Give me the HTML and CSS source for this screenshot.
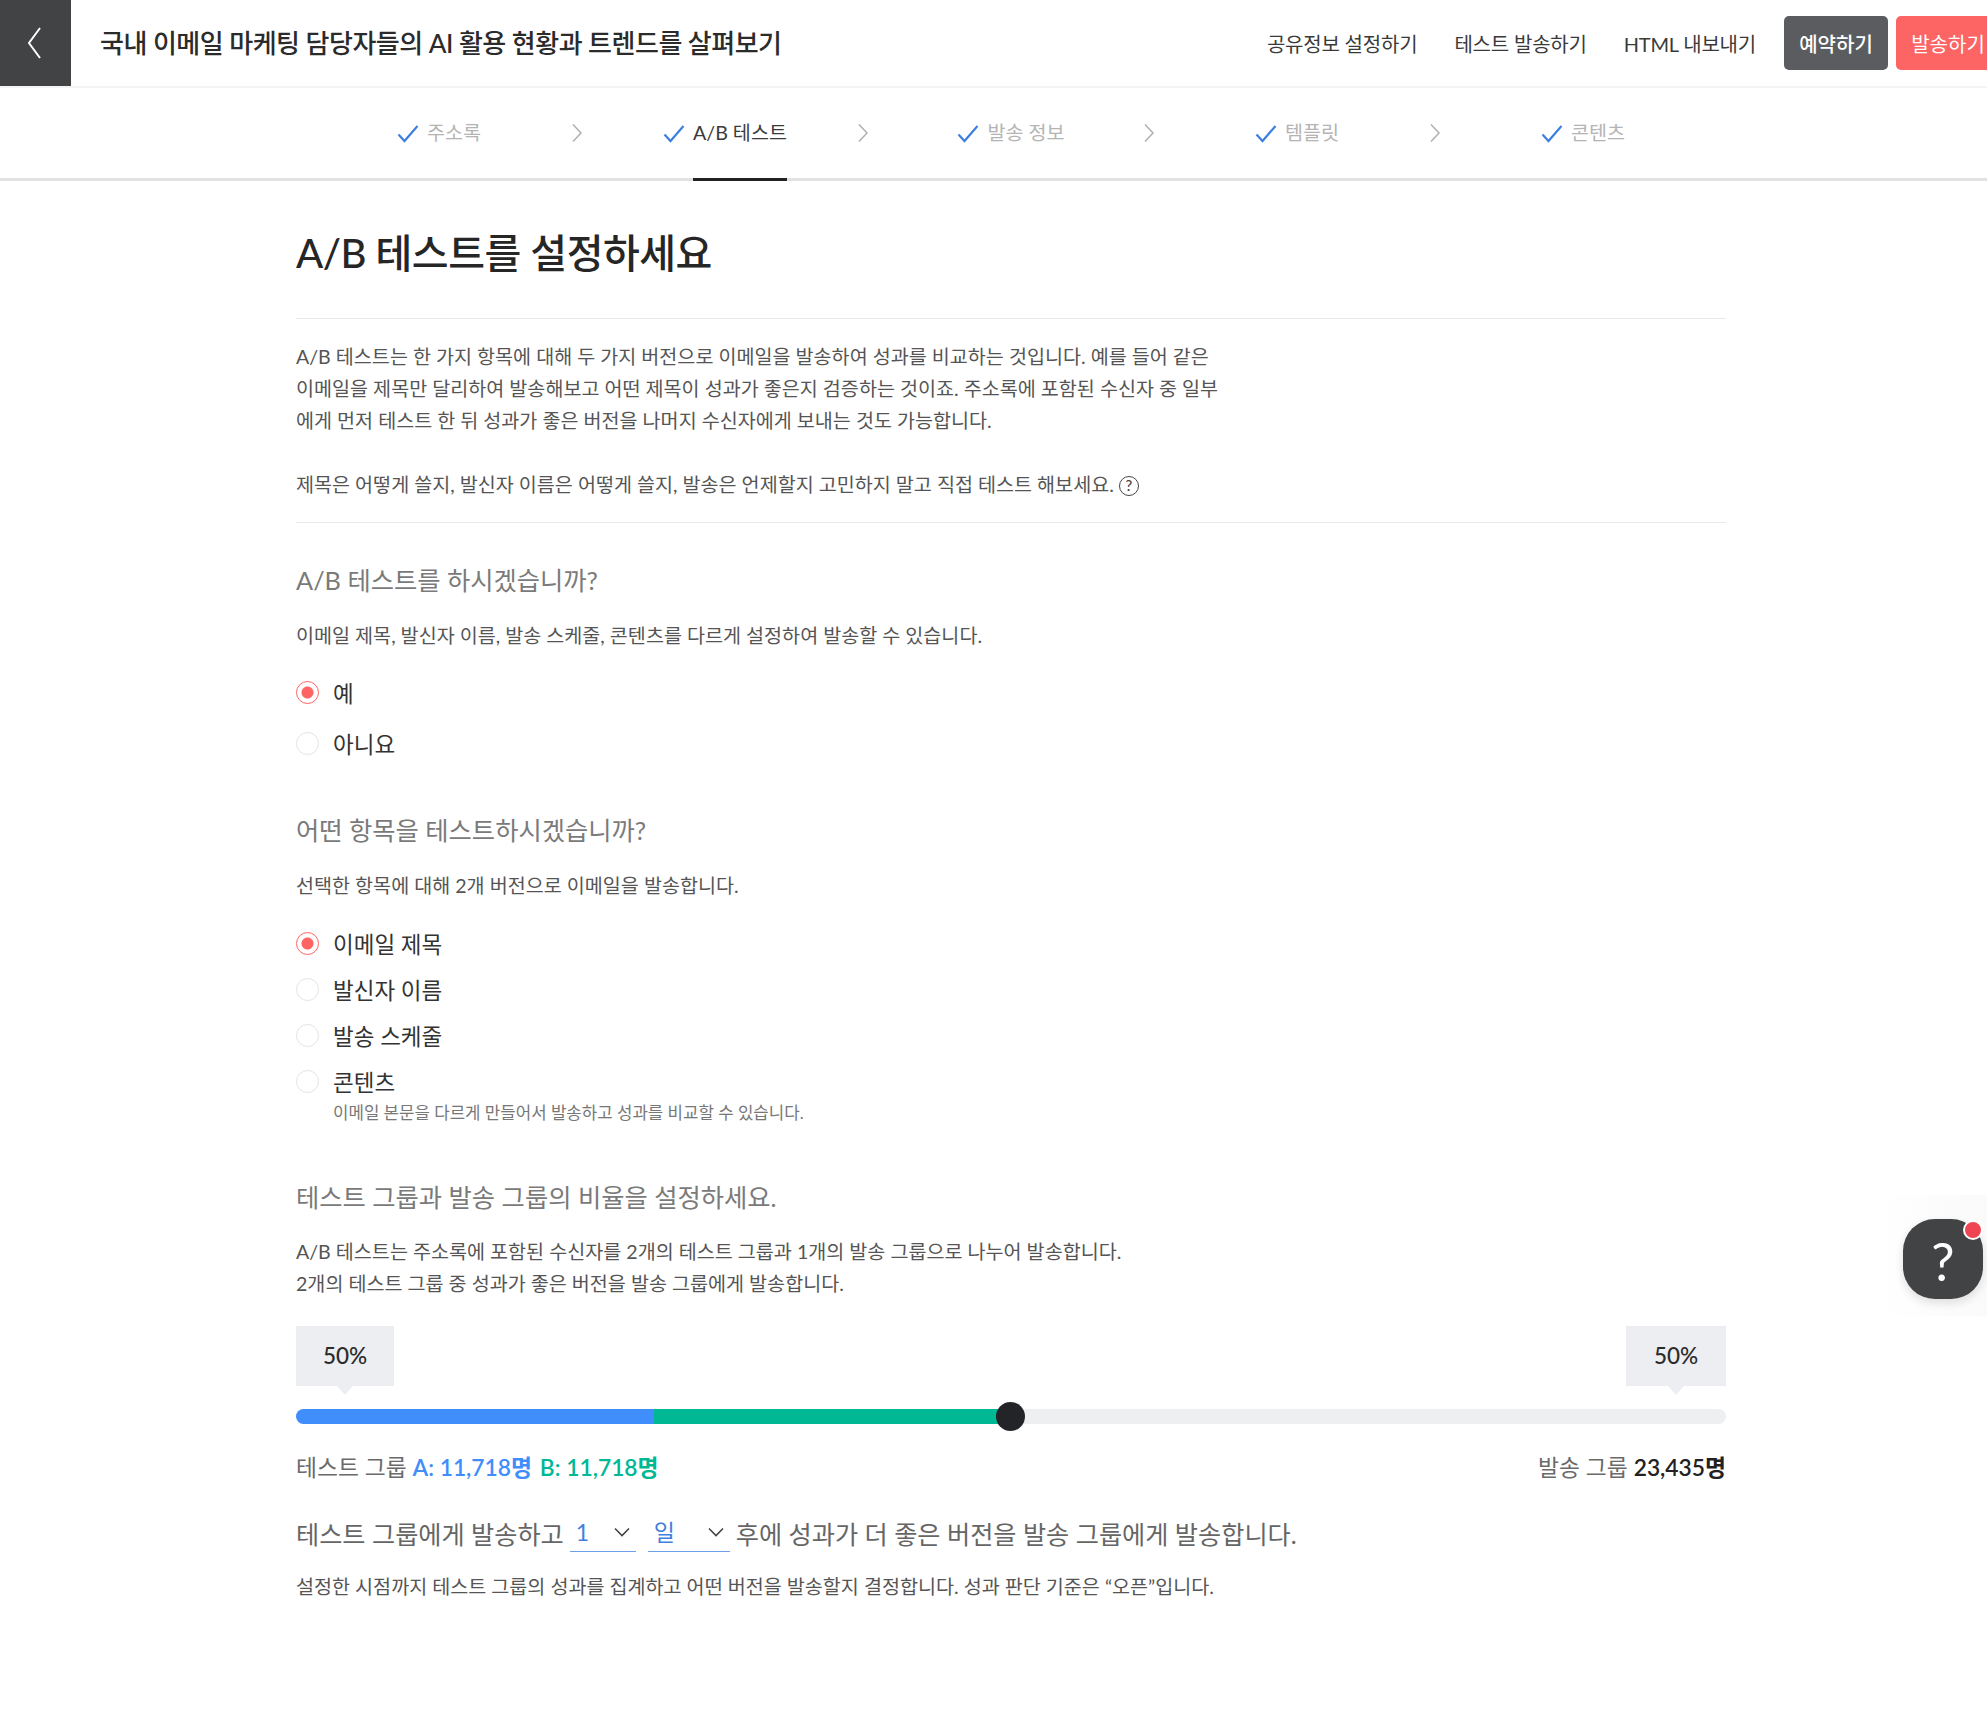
FILE: index.html
```html
<!DOCTYPE html>
<html lang="ko">
<head>
    <meta charset="UTF-8">
    <meta name="viewport" content="width=device-width, initial-scale=1.0">
    <title>A/B 테스트 설정</title>
    <link rel="stylesheet" href="styles.css">
</head>
<body>
    <header class="topbar">
        <a class="back-button" href="#">
            <svg width="20" height="32" viewBox="0 0 20 32"><path d="M14 1 3 16l11 15" fill="none" stroke="#fff" stroke-width="2"/></svg>
        </a>
        <div class="campaign-title">국내 이메일 마케팅 담당자들의 AI 활용 현황과 트렌드를 살펴보기</div>
        <nav class="top-actions">
            <a class="top-link" href="#">공유정보 설정하기</a>
            <a class="top-link" href="#">테스트 발송하기</a>
            <a class="top-link" href="#">HTML 내보내기</a>
            <button type="button" class="btn btn-dark">예약하기</button>
            <button type="button" class="btn btn-red">발송하기</button>
        </nav>
    </header>

    <div class="steps-bar">
        <div class="steps">
            <div class="step">
                <div class="step-label">
                    <svg class="check" viewBox="0 0 22 20"><path d="M1.5 10.5 7.5 17 20.5 2" fill="none" stroke="#3f7fe0" stroke-width="2.2"/></svg>
                    <span class="step-text">주소록</span>
                </div>
                <svg class="chevron" viewBox="0 0 12 20"><path d="M2 1.500 10 10 2 18.500" fill="none" stroke="#b0b0b0" stroke-width="1.500"/></svg>
            </div>
            <div class="step">
                <div class="step-label">
                    <svg class="check" viewBox="0 0 22 20"><path d="M1.5 10.5 7.5 17 20.5 2" fill="none" stroke="#3f7fe0" stroke-width="2.2"/></svg>
                    <span class="step-text active">A/B 테스트</span>
                </div>
                <svg class="chevron" viewBox="0 0 12 20"><path d="M2 1.500 10 10 2 18.500" fill="none" stroke="#b0b0b0" stroke-width="1.500"/></svg>
            </div>
            <div class="step">
                <div class="step-label">
                    <svg class="check" viewBox="0 0 22 20"><path d="M1.5 10.5 7.5 17 20.5 2" fill="none" stroke="#3f7fe0" stroke-width="2.2"/></svg>
                    <span class="step-text">발송 정보</span>
                </div>
                <svg class="chevron" viewBox="0 0 12 20"><path d="M2 1.500 10 10 2 18.500" fill="none" stroke="#b0b0b0" stroke-width="1.500"/></svg>
            </div>
            <div class="step">
                <div class="step-label">
                    <svg class="check" viewBox="0 0 22 20"><path d="M1.5 10.5 7.5 17 20.5 2" fill="none" stroke="#3f7fe0" stroke-width="2.2"/></svg>
                    <span class="step-text">템플릿</span>
                </div>
                <svg class="chevron" viewBox="0 0 12 20"><path d="M2 1.500 10 10 2 18.500" fill="none" stroke="#b0b0b0" stroke-width="1.500"/></svg>
            </div>
            <div class="step">
                <div class="step-label">
                    <svg class="check" viewBox="0 0 22 20"><path d="M1.5 10.5 7.5 17 20.5 2" fill="none" stroke="#3f7fe0" stroke-width="2.2"/></svg>
                    <span class="step-text">콘텐츠</span>
                </div>
            </div>
        </div>
    </div>

    <main class="container">
        <h1>A/B 테스트를 설정하세요</h1>

        <section class="intro">
            <p>A/B 테스트는 한 가지 항목에 대해 두 가지 버전으로 이메일을 발송하여 성과를 비교하는 것입니다. 예를 들어 같은<br>이메일을 제목만 달리하여 발송해보고 어떤 제목이 성과가 좋은지 검증하는 것이죠. 주소록에 포함된 수신자 중 일부<br>에게 먼저 테스트 한 뒤 성과가 좋은 버전을 나머지 수신자에게 보내는 것도 가능합니다.</p>
            <p class="intro-last">제목은 어떻게 쓸지, 발신자 이름은 어떻게 쓸지, 발송은 언제할지 고민하지 말고 직접 테스트 해보세요. <span class="help-mark">?</span></p>
        </section>

        <h2 class="first-title">A/B 테스트를 하시겠습니까?</h2>
        <p class="desc">이메일 제목, 발신자 이름, 발송 스케줄, 콘텐츠를 다르게 설정하여 발송할 수 있습니다.</p>
        <div class="radio-group wide">
            <div class="radio-row"><span class="radio checked"></span>예</div>
            <div class="radio-row"><span class="radio"></span>아니요</div>
        </div>

        <h2 class="second-title">어떤 항목을 테스트하시겠습니까?</h2>
        <p class="desc">선택한 항목에 대해 2개 버전으로 이메일을 발송합니다.</p>
        <div class="radio-group">
            <div class="radio-row"><span class="radio checked"></span>이메일 제목</div>
            <div class="radio-row"><span class="radio"></span>발신자 이름</div>
            <div class="radio-row"><span class="radio"></span>발송 스케줄</div>
            <div class="radio-row"><span class="radio"></span>콘텐츠</div>
        </div>
        <p class="hint">이메일 본문을 다르게 만들어서 발송하고 성과를 비교할 수 있습니다.</p>

        <h2 class="third-title">테스트 그룹과 발송 그룹의 비율을 설정하세요.</h2>
        <p class="desc desc-ratio">A/B 테스트는 주소록에 포함된 수신자를 2개의 테스트 그룹과 1개의 발송 그룹으로 나누어 발송합니다.<br>2개의 테스트 그룹 중 성과가 좋은 버전을 발송 그룹에게 발송합니다.</p>

        <div class="ratio-labels">
            <div class="ratio-tip">50%</div>
            <div class="ratio-tip">50%</div>
        </div>
        <div class="slider">
            <div class="slider-a"></div>
            <div class="slider-b"></div>
            <div class="slider-thumb"></div>
        </div>
        <div class="group-counts">
            <div>테스트 그룹 <b class="count-a">A: 11,718명</b> <b class="count-b">B: 11,718명</b></div>
            <div>발송 그룹 <b class="count-send">23,435명</b></div>
        </div>

        <div class="schedule">
            테스트 그룹에게 발송하고
            <span class="inline-select select-num">1<svg class="select-arrow" viewBox="0 0 16 10"><path d="M1 1.500 8 8.500 15 1.500" fill="none" stroke="#444" stroke-width="1.600"/></svg></span>
            <span class="inline-select select-unit">일<svg class="select-arrow" viewBox="0 0 16 10"><path d="M1 1.500 8 8.500 15 1.500" fill="none" stroke="#444" stroke-width="1.600"/></svg></span>
            후에 성과가 더 좋은 버전을 발송 그룹에게 발송합니다.
        </div>
        <p class="desc schedule-note">설정한 시점까지 테스트 그룹의 성과를 집계하고 어떤 버전을 발송할지 결정합니다. 성과 판단 기준은 “오픈”입니다.</p>
    </main>

    <div class="help-area">
        <div class="help-button">?<span class="help-dot"></span></div>
    </div>
</body>
</html>
```

FILE: styles.css
```css
body {
    font-family: Lato, "Noto Sans CJK KR", sans-serif;
    margin: 0;
    padding: 0;
    background-color: #ffffff;
    color: #555555;
    position: relative;
    min-height: 1709px;
    overflow-x: hidden;
}
a {
    color: inherit;
    text-decoration: none;
}
h1, h2, p {
    margin: 0;
    font-weight: 400;
}

/* top bar */
.topbar {
    display: flex;
    align-items: center;
    height: 86px;
    border-bottom: 2px solid #f4f4f4;
    overflow: hidden;
}
.back-button {
    display: flex;
    align-items: center;
    justify-content: center;
    width: 71px;
    height: 86px;
    flex: none;
    background-color: #424345;
}
.campaign-title {
    margin-left: 29px;
    padding-bottom: 3px;
    font-size: 26px;
    font-weight: 500;
    letter-spacing: -0.5px;
    color: #2b2b2b;
}
.top-actions {
    display: flex;
    align-items: center;
    margin-left: auto;
    flex: none;
    width: 720px;
    justify-content: flex-end;
    margin-right: -13px;
}
.top-link {
    font-size: 20px;
    letter-spacing: -0.2px;
    color: #3a3a3a;
    margin-right: 37px;
    white-space: nowrap;
}
.top-link + .btn {
    margin-left: -9px;
}
.btn {
    height: 54px;
    width: 104px;
    flex: none;
    border: none;
    border-radius: 5px;
    font-family: inherit;
    font-size: 20px;
    color: #ffffff;
    padding: 0;
    white-space: nowrap;
}
.btn-dark {
    background-color: #5b5c5f;
    font-weight: 500;
}
.btn-red {
    margin-left: 8px;
    background-color: #fd6464;
    border-radius: 5px 0 0 5px;
}

/* steps */
.steps-bar {
    height: 90px;
    border-bottom: 3px solid #e2e2e2;
}
.steps {
    display: flex;
    margin-left: 296px;
    width: 1430px;
    height: 93px;
}
.step {
    display: grid;
    grid-template-columns: 1fr auto 1fr;
    align-items: center;
    width: 286px;
    height: 93px;
}
.step-label {
    grid-column: 2;
    display: flex;
    align-items: center;
    height: 93px;
    font-size: 19.6px;
    color: #b4b4b4;
}
.check {
    width: 22px;
    height: 20px;
    margin-right: 8px;
    margin-bottom: 2px;
}
.step-text {
    height: 90px;
    line-height: 90px;
    border-bottom: 3px solid transparent;
    white-space: nowrap;
}
.step-text.active {
    color: #3a3a3a;
    border-bottom-color: #222222;
}
.chevron {
    grid-column: 3;
    justify-self: end;
    width: 12px;
    height: 20px;
    margin-right: -1px;
    margin-bottom: 3px;
}

/* content */
.container {
    margin-left: 296px;
    width: 1430px;
}
h1 {
    padding-top: 44px;
    padding-bottom: 37px;
    font-size: 40px;
    line-height: 56px;
    font-weight: 500;
    color: #262626;
    letter-spacing: -0.5px;
    border-bottom: 1px solid #e8e8e8;
}
.intro {
    padding: 22px 0 21px;
    border-bottom: 1px solid #e8e8e8;
    font-size: 19.6px;
    line-height: 32px;
}
.intro-last {
    margin-top: 32px;
}
.help-mark {
    box-sizing: border-box;
    display: inline-block;
    width: 20px;
    height: 20px;
    line-height: 17px;
    border: 1.5px solid #444444;
    border-radius: 50%;
    font-size: 15px;
    font-weight: 500;
    text-align: center;
    vertical-align: 1px;
    color: #444444;
}
h2 {
    font-size: 25.3px;
    line-height: 36px;
    color: #7a7a7a;
}
.first-title {
    margin-top: 39px;
}
.second-title {
    margin-top: 44px;
}
.third-title {
    margin-top: 53px;
}
.desc {
    margin-top: 22px;
    font-size: 19.6px;
    line-height: 32px;
}
.desc-ratio {
    margin-top: 21px;
}
.radio-group {
    margin-top: 18px;
}
.radio-group.wide {
    margin-top: 14px;
}
.radio-row {
    display: flex;
    align-items: center;
    height: 46px;
    font-size: 22.5px;
    color: #333333;
}
.radio-group.wide .radio-row {
    height: 51px;
}
.radio {
    box-sizing: border-box;
    width: 23px;
    height: 23px;
    margin-right: 14px;
    margin-top: 1px;
    border: 1.5px solid #e4e4e4;
    border-radius: 50%;
    background-color: #ffffff;
}
.radio.checked {
    border-color: #fd6464;
    background: radial-gradient(circle, #fd6464 0, #fd6464 5.5px, #ffffff 6.5px);
}
.hint {
    margin-left: 37px;
    margin-top: -4px;
    font-size: 16.8px;
    line-height: 26px;
    color: #777777;
}

/* ratio slider */
.ratio-labels {
    display: flex;
    justify-content: space-between;
    margin-top: 26px;
}
.ratio-tip {
    position: relative;
    width: 98px;
    height: 60px;
    line-height: 60px;
    text-align: center;
    font-size: 22.5px;
    font-weight: 500;
    color: #2b2b2b;
    background-color: #eceef1;
}
.ratio-tip:last-child {
    width: 100px;
}
.ratio-tip::after {
    content: "";
    position: absolute;
    left: calc(50% - 8px);
    top: 60px;
    border-left: 8px solid transparent;
    border-right: 8px solid transparent;
    border-top: 9px solid #eceef1;
}
.slider {
    position: relative;
    display: flex;
    height: 15px;
    margin-top: 23px;
    border-radius: 8px;
    background-color: #eeeff1;
}
.slider-a {
    width: 358px;
    background-color: #3f8efc;
    border-radius: 8px 0 0 8px;
}
.slider-b {
    width: 357px;
    background-color: #00b894;
}
.slider-thumb {
    position: absolute;
    left: 700px;
    top: -7px;
    width: 29px;
    height: 29px;
    border-radius: 50%;
    background-color: #222428;
}
.group-counts {
    display: flex;
    justify-content: space-between;
    margin-top: 25px;
    font-size: 22.8px;
    line-height: 36px;
    color: #6a6a6a;
}
.group-counts b {
    font-weight: 600;
}
.count-a {
    color: #3f8efc;
    margin-right: 2px;
}
.count-b {
    color: #00b894;
}
.count-send {
    color: #222222;
}
.schedule {
    display: flex;
    align-items: center;
    gap: 6px;
    margin-top: 30px;
    font-size: 25.2px;
    line-height: 38px;
    color: #666666;
}
.inline-select {
    box-sizing: border-box;
    display: flex;
    justify-content: space-between;
    align-items: center;
    height: 36px;
    padding: 0 0 4px 6px;
    border-bottom: 1px solid #6f9fe8;
    font-size: 23px;
    color: #3f7fe0;
}
.select-num {
    width: 66px;
}
.select-unit {
    width: 82px;
    margin-left: 6px;
}
.select-arrow {
    width: 16px;
    height: 10px;
    margin-right: 6px;
}
.schedule-note {
    margin-top: 18px;
}

/* floating help */
.help-area {
    position: absolute;
    right: 0;
    top: 1195px;
    width: 110px;
    height: 121px;
    background: linear-gradient(to right, #ffffff, #fafafa);
}
.help-button {
    position: absolute;
    left: 26px;
    top: 24px;
    width: 80px;
    height: 80px;
    line-height: 84px;
    border-radius: 32px;
    text-align: center;
    font-size: 52px;
    color: #ffffff;
    background-color: #414345;
    box-shadow: 0 4px 10px rgba(0, 0, 0, 0.12);
}
.help-dot {
    position: absolute;
    right: 0;
    top: 1px;
    width: 16px;
    height: 16px;
    border: 2px solid #ffffff;
    border-radius: 50%;
    background-color: #ef4452;
}
```
